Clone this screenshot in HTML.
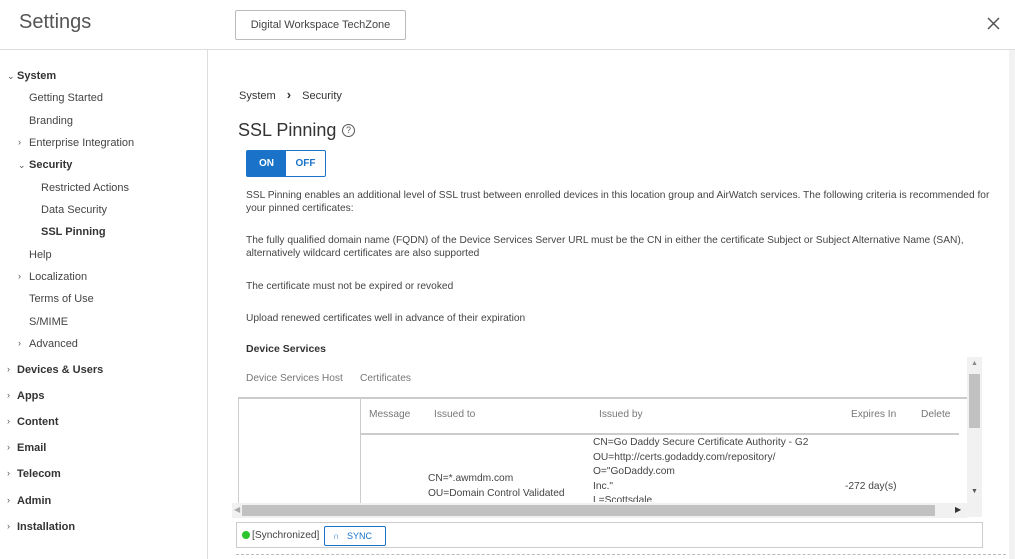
<!DOCTYPE html>
<html><head><meta charset="utf-8"><style>
*{margin:0;padding:0;box-sizing:border-box}
body{width:1015px;height:559px;overflow:hidden;background:#fff;font-family:"Liberation Sans",sans-serif;color:#333;position:relative}
.a{position:absolute;white-space:nowrap}
.s{font-size:11px;color:#444}
.p{font-size:10.2px;color:#444;left:246px}
.b{font-weight:bold;color:#333}
.car{position:absolute;font-size:9px;color:#555}
</style></head><body>
<div class="a" style="left:19px;top:11px;font-size:20px;color:#555">Settings</div>
<div class="a" style="left:235px;top:10px;width:171px;height:30px;border:1px solid #bbb;border-radius:2px;font-size:11px;color:#444;text-align:center;line-height:28px">Digital Workspace TechZone</div>
<svg class="a" style="left:987px;top:17px" width="13" height="13"><path d="M1 1L12 12M12 1L1 12" stroke="#555" stroke-width="1.5"/></svg>
<div class="a" style="left:0;top:49px;width:1015px;height:1px;background:#ddd"></div>
<div class="a" style="left:207px;top:49px;width:1px;height:510px;background:#ddd"></div>
<div class="a" style="left:1009px;top:50px;width:6px;height:509px;background:#f2f2f2"></div>

<div class="car" style="left:7px;top:71px">&#8964;</div><div class="a s b" style="left:17px;top:70px">System</div>
<div class="a s" style="left:29px;top:92px">Getting Started</div>
<div class="a s" style="left:29px;top:115px">Branding</div>
<div class="car" style="left:18px;top:137px">&#8250;</div><div class="a s" style="left:29px;top:137px">Enterprise Integration</div>
<div class="car" style="left:18px;top:160px">&#8964;</div><div class="a s b" style="left:29px;top:159px">Security</div>
<div class="a s" style="left:41px;top:182px">Restricted Actions</div>
<div class="a s" style="left:41px;top:204px">Data Security</div>
<div class="a s b" style="left:41px;top:226px">SSL Pinning</div>
<div class="a s" style="left:29px;top:249px">Help</div>
<div class="car" style="left:18px;top:271px">&#8250;</div><div class="a s" style="left:29px;top:271px">Localization</div>
<div class="a s" style="left:29px;top:293px">Terms of Use</div>
<div class="a s" style="left:29px;top:316px">S/MIME</div>
<div class="car" style="left:18px;top:338px">&#8250;</div><div class="a s" style="left:29px;top:338px">Advanced</div>
<div class="car" style="left:7px;top:364px">&#8250;</div><div class="a s b" style="left:17px;top:364px">Devices &amp; Users</div>
<div class="car" style="left:7px;top:390px">&#8250;</div><div class="a s b" style="left:17px;top:390px">Apps</div>
<div class="car" style="left:7px;top:416px">&#8250;</div><div class="a s b" style="left:17px;top:416px">Content</div>
<div class="car" style="left:7px;top:442px">&#8250;</div><div class="a s b" style="left:17px;top:442px">Email</div>
<div class="car" style="left:7px;top:468px">&#8250;</div><div class="a s b" style="left:17px;top:468px">Telecom</div>
<div class="car" style="left:7px;top:495px">&#8250;</div><div class="a s b" style="left:17px;top:495px">Admin</div>
<div class="car" style="left:7px;top:521px">&#8250;</div><div class="a s b" style="left:17px;top:521px">Installation</div>

<div class="a s" style="left:239px;top:87px;color:#333">System <b style="margin:0 8px;font-size:13px">&#8250;</b> Security</div>
<div class="a" style="left:238px;top:120px;font-size:18px;color:#333">SSL Pinning</div>
<div class="a" style="left:342px;top:124px;width:13px;height:13px;border:1px solid #555;border-radius:50%;font-size:9px;text-align:center;line-height:11px;color:#555">?</div>
<div class="a" style="left:246px;top:150px;width:80px;height:27px;border:1px solid #1a73c9;border-radius:2px;display:flex;font-size:10px;font-weight:bold">
<div style="width:39px;background:#1a73c9;color:#fff;text-align:center;line-height:25px">ON</div>
<div style="flex:1;color:#1a73c9;text-align:center;line-height:25px">OFF</div></div>
<div class="a p" style="top:190px">SSL Pinning enables an additional level of SSL trust between enrolled devices in this location group and AirWatch services. The following criteria is recommended for</div>
<div class="a p" style="top:203px">your pinned certificates:</div>
<div class="a p" style="top:235px">The fully qualified domain name (FQDN) of the Device Services Server URL must be the CN in either the certificate Subject or Subject Alternative Name (SAN),</div>
<div class="a p" style="top:248px">alternatively wildcard certificates are also supported</div>
<div class="a p" style="top:281px">The certificate must not be expired or revoked</div>
<div class="a p" style="top:313px">Upload renewed certificates well in advance of their expiration</div>
<div class="a p b" style="top:343px;font-size:10.5px">Device Services</div>

<div class="a" style="left:967px;top:357px;width:15px;height:160px;background:#f1f1f1"></div>
<div class="a" style="left:969px;top:374px;width:11px;height:54px;background:#c1c1c1"></div>
<div class="a" style="left:971px;top:360px;font-size:7px;color:#888">&#9650;</div>
<div class="a" style="left:971px;top:488px;font-size:7px;color:#555">&#9660;</div>
<div class="a p" style="top:373px;color:#777">Device Services Host</div>
<div class="a p" style="left:360px;top:373px;color:#777">Certificates</div>
<div class="a" style="left:238px;top:397px;width:729px;height:106px;border-left:1px solid #ccc;border-top:2px solid #ccc"></div>
<div class="a" style="left:360px;top:398px;width:1px;height:105px;background:#ccc"></div>
<div class="a p" style="left:369px;top:409px;color:#777">Message</div>
<div class="a p" style="left:434px;top:409px;color:#777">Issued to</div>
<div class="a p" style="left:599px;top:409px;color:#777">Issued by</div>
<div class="a p" style="left:851px;top:409px;color:#777">Expires In</div>
<div class="a p" style="left:921px;top:409px;color:#777">Delete</div>
<div class="a" style="left:361px;top:433px;width:598px;height:2px;background:#ccc"></div>
<div class="a p" style="left:593px;top:436px;line-height:14.5px;height:66px;overflow:hidden">CN=Go Daddy Secure Certificate Authority - G2<br>OU=http://certs.godaddy.com/repository/<br>O="GoDaddy.com<br>Inc."<br>L=Scottsdale</div>
<div class="a p" style="left:428px;top:472px;line-height:14.5px">CN=*.awmdm.com<br>OU=Domain Control Validated</div>
<div class="a p" style="left:845px;top:481px">-272 day(s)</div>
<div class="a" style="left:232px;top:503px;width:735px;height:15px;background:#f1f1f1"></div>
<div class="a" style="left:242px;top:505px;width:693px;height:11px;background:#c1c1c1"></div>
<div class="a" style="left:234px;top:505px;font-size:8px;color:#aaa">&#9664;</div>
<div class="a" style="left:955px;top:505px;font-size:8px;color:#333">&#9654;</div>
<div class="a" style="left:236px;top:522px;width:747px;height:26px;border:1px solid #ccc"></div>
<div class="a" style="left:242px;top:531px;width:8px;height:8px;border-radius:50%;background:#2bc42b"></div>
<div class="a p" style="left:252px;top:530px">[Synchronized]</div>
<div class="a" style="left:324px;top:526px;width:62px;height:20px;border:1px solid #1a73c9;border-radius:2px;font-size:9px;color:#1a73c9;line-height:18px;padding-left:8px">&#8745;&nbsp;&nbsp;&nbsp;SYNC</div>
<div class="a" style="left:236px;top:554px;width:770px;border-top:1px dashed #bbb"></div>
</body></html>
